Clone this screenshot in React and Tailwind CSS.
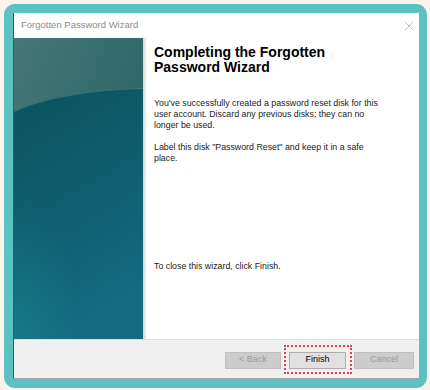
import { X } from 'lucide-react'

function SidePanel() {
  return (
    <svg width="129" height="301" viewBox="0 0 129 301" preserveAspectRatio="none" className="block">
      <defs>
        <linearGradient id="topGlow" x1="0" y1="0" x2="1" y2="1">
          <stop offset="0" stopColor="#467777" />
          <stop offset="1" stopColor="#1d5c61" />
        </linearGradient>
        <linearGradient id="body" x1="0" y1="0" x2="0.3" y2="1">
          <stop offset="0" stopColor="#0a525d" />
          <stop offset="0.55" stopColor="#0e5f70" />
          <stop offset="1" stopColor="#146b82" />
        </linearGradient>
        <linearGradient id="band" x1="0" y1="0" x2="1" y2="0">
          <stop offset="0" stopColor="#2d6a6c" stopOpacity="0.4" />
          <stop offset="1" stopColor="#3d7778" stopOpacity="0.8" />
        </linearGradient>
        <radialGradient id="corner" cx="0" cy="1" r="0.5">
          <stop offset="0" stopColor="#1b8a90" stopOpacity="0.45" />
          <stop offset="1" stopColor="#1b8a90" stopOpacity="0" />
        </radialGradient>
      </defs>
      <rect width="129" height="301" fill="url(#topGlow)" />
      <path d="M0 74 C 30 58, 80 50, 129 50 L129 301 L0 301 Z" fill="url(#band)" />
      <path d="M0 74 C 30 60, 80 52, 129 51 L129 301 L0 301 Z" fill="url(#body)" />
      <rect width="129" height="301" fill="url(#corner)" />
    </svg>
  )
}

export default function App() {
  return (
    <div className="w-[430px] h-[390px] bg-[#fcf4ea] p-[4px] pr-[3px] pb-[2px]" style={{ fontFamily: '"Liberation Sans", Arial, sans-serif' }}>
      <div className="w-full h-full bg-[#5bc1c3] rounded-[11px] pt-[9px] pl-[9px] pr-[8px] pb-[9px]">
        <div className="w-full h-full bg-white flex flex-col border-l border-b border-l-[#3d5a5c] border-b-[#a5a5a5]">
          {/* Title bar */}
          <div className="h-[25px] flex items-center justify-between pl-[7px] pr-[2px] shrink-0">
            <span className="text-[9.5px] text-[#8c8c8c]">Forgotten Password Wizard</span>
            <X className="w-[16px] h-[16px] text-[#a3a3a3]" strokeWidth={1.1} />
          </div>

          {/* Body */}
          <div className="flex h-[301px] shrink-0">
            <div className="w-[129px] shrink-0 relative">
              <SidePanel />
              <div className="absolute top-0 right-[-4px] w-[4px] h-full bg-gradient-to-r from-[#d4d4d4] to-white" />
            </div>
            <div className="flex-1 pl-[11px] pt-[7px] pr-[10px] text-black">
              <h1 className="text-[14px] leading-[15px] font-bold">
                Completing the Forgotten
                <br />
                Password Wizard
              </h1>
              <p className="mt-[23px] text-[8.8px] leading-[11px] text-[#1a1a1a]">
                You've successfully created a password reset disk for this
                <br />
                user account. Discard any previous disks; they can no
                <br />
                longer be used.
              </p>
              <p className="mt-[11px] text-[8.8px] leading-[11px] text-[#1a1a1a]">
                Label this disk "Password Reset" and keep it in a safe
                <br />
                place.
              </p>
              <p className="mt-[97px] text-[8.8px] leading-[11px] text-[#1a1a1a]">
                To close this wizard, click Finish.
              </p>
            </div>
          </div>

          {/* Button bar */}
          <div className="flex-1 bg-[#f0f0f0] border-t border-[#dcdcdc] flex items-center justify-end gap-[8px] pr-[5px] pt-[2px]">
            <div className="w-[56px] h-[17px] bg-[#cccccc] border border-[#bfbfbf] flex items-center justify-center text-[9px] text-[#9d9d9d]">
              &lt; Back
            </div>
            <div className="relative">
              <div className="w-[57px] h-[17px] bg-[#e1e1e1] border border-[#adadad] flex items-center justify-center text-[9px] text-black">
                Finish
              </div>
              <div className="absolute -left-[5px] -top-[7px] w-[68px] h-[29px] border-2 border-dotted border-[#e0404f]" />
            </div>
            <div className="w-[60px] h-[17px] bg-[#cccccc] border border-[#bfbfbf] flex items-center justify-center text-[9px] text-[#9d9d9d]">
              Cancel
            </div>
          </div>
        </div>
      </div>
    </div>
  )
}
